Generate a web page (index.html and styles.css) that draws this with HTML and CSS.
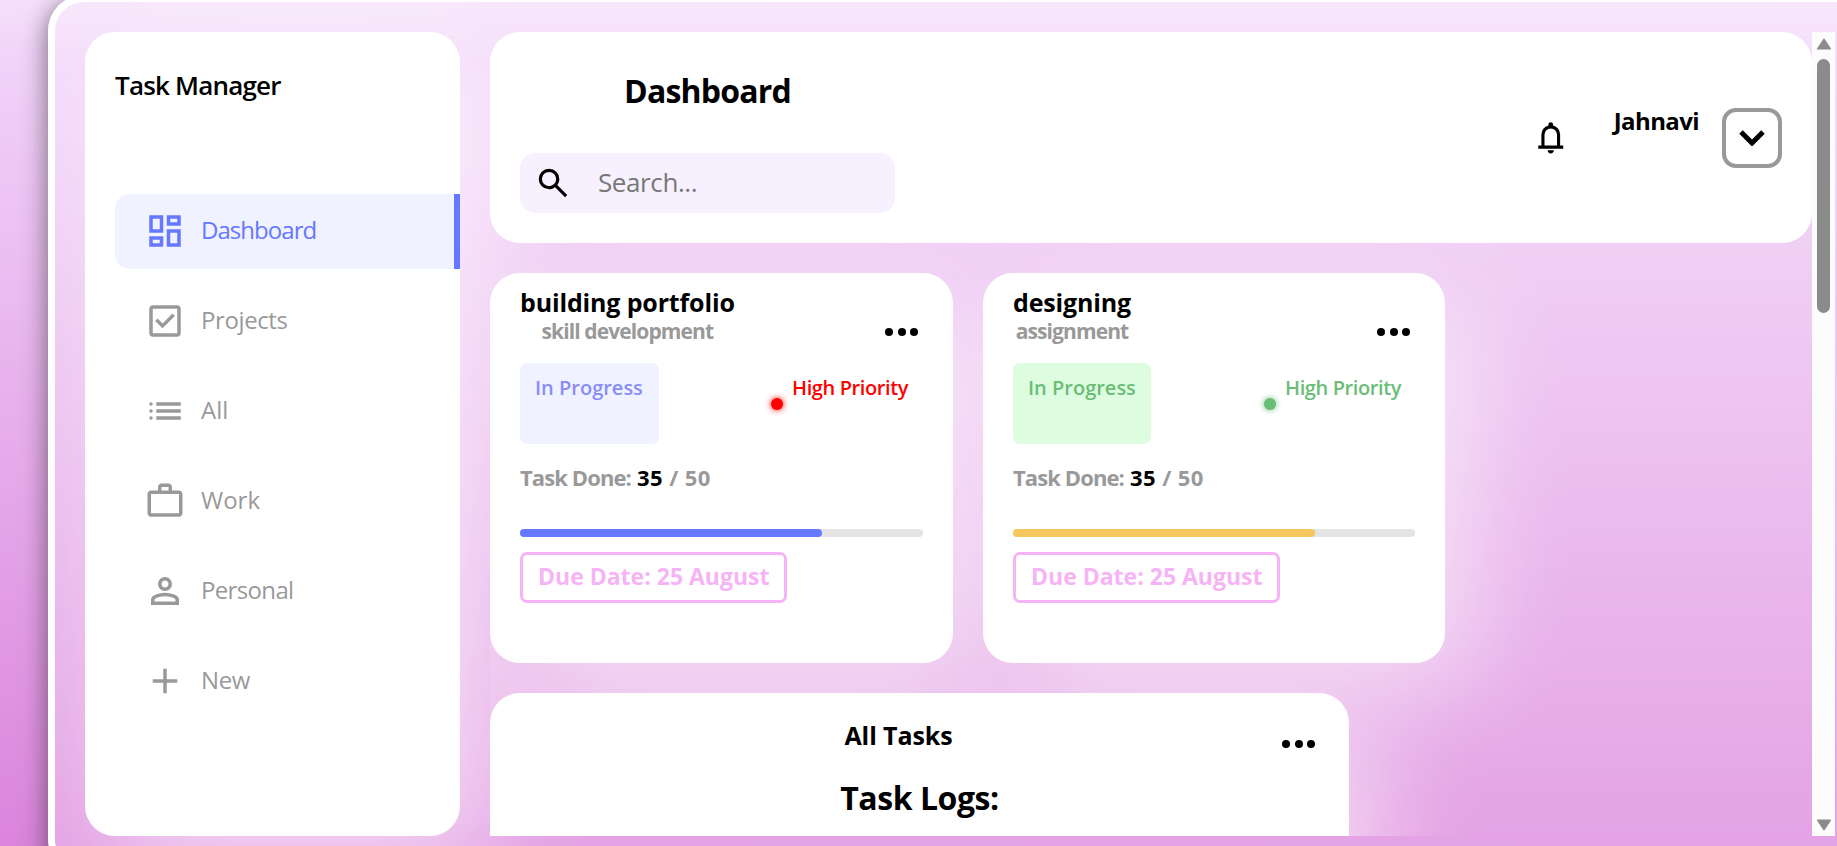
FILE: index.html
```html
<!DOCTYPE html>
<html lang="en">
<head>
<meta charset="utf-8">
<title>Task Manager</title>
<link rel="stylesheet" href="styles.css">
</head>
<body>
<div class="panel">
  <aside class="sidebar">
    <h1 class="brand">Task Manager</h1>
    <nav class="menu">
      <a class="item active"><svg viewBox="0 -960 960 960"><path fill-rule="evenodd" d="M520-840h320v240H520ZM120-840h320v400H120ZM520-520h320v400H520ZM120-360h320v240H120ZM200-760v240h160v-240ZM600-760v80h160v-80ZM600-440v240h160v-240ZM200-280v80h160v-80Z"/></svg><span>Dashboard</span></a>
      <a class="item projects"><svg viewBox="0 -960 960 960"><path d="m424-312 282-282-56-56-226 226-114-114-56 56 170 170ZM200-120q-33 0-56.500-23.500T120-200v-560q0-33 23.500-56.500T200-840h560q33 0 56.500 23.500T840-760v560q0 33-23.500 56.500T760-120H200Zm0-80h560v-560H200v560Z"/></svg><span>Projects</span></a>
      <a class="item"><svg viewBox="0 -960 960 960"><path d="M280-600v-80h560v80H280Zm0 160v-80h560v80H280Zm0 160v-80h560v80H280ZM160-600a40 40 0 1 1 0-80 40 40 0 0 1 0 80Zm0 160a40 40 0 1 1 0-80 40 40 0 0 1 0 80Zm0 160a40 40 0 1 1 0-80 40 40 0 0 1 0 80Z"/></svg><span>All</span></a>
      <a class="item"><svg viewBox="0 -960 960 960"><path d="M160-120q-33 0-56.500-23.500T80-200v-440q0-33 23.500-56.500T160-720h160v-80q0-33 23.500-56.500T400-880h160q33 0 56.500 23.500T640-800v80h160q33 0 56.500 23.500T880-640v440q0 33-23.500 56.500T800-120H160Zm0-80h640v-440H160v440Zm240-520h160v-80H400v80Z"/></svg><span>Work</span></a>
      <a class="item personal"><svg viewBox="0 -960 960 960"><path d="M480-480q-66 0-113-47t-47-113q0-66 47-113t113-47q66 0 113 47t47 113q0 66-47 113t-113 47ZM160-160v-112q0-34 17.500-62.500T224-378q62-31 126-46.500T480-440q66 0 130 15.500T736-378q29 15 46.500 43.500T800-272v112H160Zm80-80h480v-32q0-11-5.500-20T700-306q-54-27-109-40.500T480-360q-56 0-111 13.500T260-306q-9 5-14.500 14t-5.500 20v32Zm240-320q33 0 56.500-23.500T560-640q0-33-23.500-56.500T480-720q-33 0-56.500 23.500T400-640q0 33 23.500 56.500T480-560Z"/></svg><span>Personal</span></a>
      <a class="item projects"><svg viewBox="0 -960 960 960"><path d="M440-440H200v-80h240v-240h80v240h240v80H520v240h-80v-240Z"/></svg><span>New</span></a>
    </nav>
  </aside>
  <main class="main">
    <div class="content">
      <header class="topbar">
        <div class="lead">
          <h2 class="title">Dashboard</h2>
          <label class="search"><svg viewBox="0 -960 960 960"><path d="M784-120 532-372q-30 24-69 38t-83 14q-109 0-184.500-75.500T120-580q0-109 75.500-184.500T380-840q109 0 184.500 75.500T640-580q0 44-14 83t-38 69l252 252-56 56ZM380-400q75 0 127.500-52.500T560-580q0-75-52.500-127.500T380-760q-75 0-127.500 52.500T200-580q0 75 52.500 127.500T380-400Z"/></svg><input type="text" placeholder="Search..."></label>
        </div>
        <div class="user">
          <svg class="bell" viewBox="0 -960 960 960"><path d="M160-200v-80h80v-280q0-83 50-147.500T420-792v-28q0-25 17.500-42.500T480-880q25 0 42.500 17.500T540-820v28q80 20 130 84.500T720-560v280h80v80H160ZM480-80q-33 0-56.500-23.500T400-160h160q0 33-23.500 56.500T480-80ZM320-280h320v-280q0-66-47-113t-113-47q-66 0-113 47t-47 113v280Z"/></svg>
          <span class="name">Jahnavi</span>
          <span class="drop"><svg viewBox="0 0 26 16"><path d="M2 2 13 13 24 2"/></svg></span>
        </div>
      </header>
      <section class="cards">
        <article class="card blue">
          <div class="head"><div class="names"><h3>building portfolio</h3><p>skill development</p></div><span class="dots"><i></i><i></i><i></i></span></div>
          <div class="status"><span class="chip">In Progress</span><span class="priority"><i></i><span>High Priority</span></span></div>
          <p class="done"><span>Task Done:</span> <b>35</b> / 50</p>
          <div class="bar"><div class="fill"></div></div>
          <span class="due">Due Date: 25 August</span>
        </article>
        <article class="card green">
          <div class="head"><div class="names"><h3>designing</h3><p>assignment</p></div><span class="dots"><i></i><i></i><i></i></span></div>
          <div class="status"><span class="chip">In Progress</span><span class="priority"><i></i><span>High Priority</span></span></div>
          <p class="done"><span>Task Done:</span> <b>35</b> / 50</p>
          <div class="bar"><div class="fill"></div></div>
          <span class="due">Due Date: 25 August</span>
        </article>
      </section>
      <section class="tasks">
        <div class="tasks-head"><h3>All Tasks</h3><span class="dots"><i></i><i></i><i></i></span></div>
        <h2>Task Logs:</h2>
      </section>
    </div>
    <div class="scroll"><svg viewBox="0 0 14 11"><path d="M7 1 13 10H1Z"/></svg><div class="thumb"></div><svg viewBox="0 0 14 11"><path d="M7 10 13 1H1Z"/></svg></div>
  </main>
</div>
</body>
</html>
```
FILE: styles.css
```css
* { box-sizing: border-box; margin: 0; padding: 0; }
html { overflow: hidden; }
body {
  width: 1837px; height: 846px; overflow: hidden;
  font-family: "Open Sans", sans-serif; color: #000;
  background: linear-gradient(#f5e0fb 0, #f1d2f9 60px, #db84dc 846px);
}
h1, h2, h3 { font-weight: 700; }
.panel {
  width: 1789px; height: 880px; margin: -5px 0 0 48px; padding: 30px 2px 30px 30px;
  display: flex; gap: 30px; align-items: flex-start;
  border: 7px solid #fff; border-right: 0; border-radius: 36px 0 0 36px;
  background: rgba(255,255,255,.25); background-clip: padding-box;
  box-shadow: 0 5px 26px rgba(0,0,0,.55);
}
.sidebar {
  flex: none; width: 375px; height: 804px; padding: 29px 0 0 30px;
  background: #fff; border-radius: 30px;
  box-shadow: 30px 30px 100px rgba(255,255,255,.55);
}
.brand { font-size: 26px; line-height: 48px; font-weight: 600; letter-spacing: -.8px; }
.menu { margin-top: 85px; display: flex; flex-direction: column; gap: 15px; }
.item { display: flex; align-items: center; gap: 15px; height: 75px; padding-left: 29px; border-radius: 15px 0 0 15px; font-size: 24px; color: #999; }
.item svg { width: 42px; height: 42px; margin-bottom: 1px; fill: currentColor; }
.item span { margin-bottom: 4px; }
.item.active { color: #6678ff; background: #f0f2ff; border-right: 6px solid #6678ff; letter-spacing: -.95px; }
.item.projects { letter-spacing: -.4px; }
.item.personal { letter-spacing: -.65px; }
.main { flex: none; width: 1345px; height: 804px; overflow: hidden; display: flex; position: relative; }
.content { width: 1322px; display: flex; flex-direction: column; gap: 30px; }
.topbar { height: 211px; flex: none; padding: 29px 30px 30px; border-radius: 30px; background: #fff; display: flex; justify-content: space-between; }
.lead { width: 375px; display: flex; flex-direction: column; gap: 32px; }
.title { font-size: 32px; line-height: 60px; text-align: center; letter-spacing: -.8px; }
.search { display: flex; align-items: center; height: 60px; padding-left: 14px; gap: 26px; border-radius: 15px; background: #f7f1ff; }
.search svg { width: 38px; height: 38px; }
.search input { width: 240px; border: 0; outline: 0; background: none; font: 26px "Open Sans", sans-serif; letter-spacing: -.4px; margin-bottom: 2px; }
.search input::placeholder { color: #777; }
.user { display: flex; align-items: center; padding-top: 1px; }
.bell { width: 37.500px; height: 37.500px; }
.name { font-size: 24px; line-height: 30px; font-weight: 700; letter-spacing: -.6px; margin: -33px 23px 0 44px; }
.drop { width: 60px; height: 60px; border: 4px solid #999; border-radius: 14px; display: grid; place-items: center; }
.drop svg { width: 26px; height: 16px; fill: none; stroke: #000; stroke-width: 5; }
.cards { display: flex; gap: 30px; flex: none; }
.card { width: 463px; height: 390px; padding: 10px 30px 0; border-radius: 30px; background: #fff; box-shadow: 30px 30px 100px rgba(255,255,255,.55); }
.card + .card { width: 462px; }
.head { display: flex; justify-content: space-between; height: 80px; }
.names { text-align: center; }
.names h3 { font-size: 25px; line-height: 38px; letter-spacing: -.15px; }
.names p { font-size: 21px; line-height: 21px; font-weight: 700; color: #999; letter-spacing: -.9px; }
.dots { display: flex; gap: 4.500px; margin: 45px 5px 0 0; }
.dots i { width: 8px; height: 8px; border-radius: 50%; background: #000; }
.status { display: flex; justify-content: space-between; height: 81px; font-size: 20px; line-height: 28px; font-weight: 600; }
.chip { width: 139px; padding: 11px 0 0 15px; border-radius: 7px; color: #888df8; background: #f0f2ff; }
.priority { display: flex; gap: 9px; margin: 11px 15px 0 0; color: red; letter-spacing: -.4px; }
.priority i { width: 12px; height: 12px; margin-top: 24px; border-radius: 50%; background: currentColor; box-shadow: 0 0 6px currentColor; }
.green .chip { width: 138px; color: #69bd76; background: #defde0; }
.green .priority { color: #69bd76; margin-right: 14px; }
.done { margin-top: 18px; font-size: 22px; line-height: 30px; font-weight: 700; color: #999; letter-spacing: .4px; }
.done span { letter-spacing: -.9px; }
.done b { color: #000; font-weight: 700; }
.bar { height: 8px; margin: 37px 0 15px; border-radius: 4px; background: #e4e4e4; }
.fill { width: 75%; height: 8px; border-radius: 4px; background: #6678ff; }
.green .fill { background: #f5c75f; }
.due { display: block; width: 267px; height: 51px; padding-left: 15px; border: 3px solid #f6b3f5; border-radius: 7px; color: #f6b3f5; font-size: 23px; line-height: 43px; font-weight: 700; }
.tasks { width: 859px; height: 350px; flex: none; border-radius: 30px 30px 0 0; background: #fff; box-shadow: 30px 30px 100px rgba(255,255,255,.55); text-align: center; }
.tasks-head { display: flex; height: 75px; padding: 23px 34px 0; }
.tasks-head h3 { flex: 1; padding-right: 9px; font-size: 25px; line-height: 38px; letter-spacing: -.1px; }
.tasks-head .dots { margin: 24px 0 0; }
.tasks h2 { font-size: 32px; line-height: 60px; letter-spacing: -.45px; }
.scroll { width: 23px; background: #fcfcfc; display: flex; flex-direction: column; align-items: center; padding: 6px 0 5px; fill: #8b8b8b; }
.scroll svg { width: 16px; height: 12px; stroke: #8b8b8b; stroke-width: 1; stroke-linejoin: round; }
.thumb { width: 13px; height: 254px; margin: 9px 0 auto; border-radius: 7px; background: #8b8b8b; }
```
